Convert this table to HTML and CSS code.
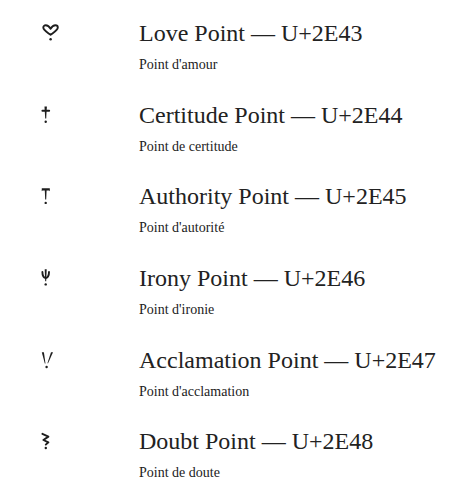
FILE: index.html
```html
<!DOCTYPE html>
<html lang="en">
<head>
<meta charset="utf-8">
<title>Punctuation Points</title>
<link rel="stylesheet" href="styles.css">
</head>
<body>
<ul class="points">
  <li class="point">
    <svg class="glyph" viewBox="0 0 22 22" width="22" height="22" aria-hidden="true">
      <path class="line" d="M10.6 12.8 C7.5 10.5 3.3 8.3 3.3 5.6 C3.3 4 4.4 3.3 5.7 3.3 C7.5 3.3 9.4 4.8 10.6 6.8 C11.8 4.8 13.6 3.3 15.4 3.3 C16.7 3.3 17.8 4 17.8 5.6 C17.8 8.3 13.7 10.5 10.6 12.8"/>
      <circle class="dot" cx="10.6" cy="17.2" r="1.25"/>
    </svg>
    <div class="text">
      <h2 class="name">Love Point — U+2E43</h2>
      <p class="fr">Point d'amour</p>
    </div>
  </li>
  <li class="point">
    <svg class="glyph" viewBox="0 0 22 22" width="22" height="22" aria-hidden="true">
      <path class="fill" d="M4.5 2.6 L6.9 2.6 L6.2 14.4 L5.2 14.4 Z"/>
      <path class="line" d="M2.4 6.8 L9.2 6.8"/>
      <circle class="dot" cx="5.7" cy="17.7" r="1.2"/>
    </svg>
    <div class="text">
      <h2 class="name">Certitude Point — U+2E44</h2>
      <p class="fr">Point de certitude</p>
    </div>
  </li>
  <li class="point">
    <svg class="glyph" viewBox="0 0 22 22" width="22" height="22" aria-hidden="true">
      <path class="fill" d="M1.8 3.2 L9.8 3.2 L9.9 6.2 L9.1 5.4 L6.6 5.4 L6.2 14.4 L5.2 14.4 L4.8 5.4 L2.5 5.4 L1.7 6.2 Z"/>
      <circle class="dot" cx="5.7" cy="17.9" r="1.2"/>
    </svg>
    <div class="text">
      <h2 class="name">Authority Point — U+2E45</h2>
      <p class="fr">Point d'autorité</p>
    </div>
  </li>
  <li class="point">
    <svg class="glyph" viewBox="0 0 22 22" width="22" height="22" aria-hidden="true">
      <path class="fill" d="M4.7 2.2 L6.7 2.2 L6.2 14.2 L5.2 14.2 Z"/>
      <path class="line" d="M2.4 5 C2.4 8.6 3.6 10.6 5.7 11.2 C7.8 10.6 9 8.6 9 5"/>
      <circle class="dot" cx="5.7" cy="17.4" r="1.2"/>
    </svg>
    <div class="text">
      <h2 class="name">Irony Point — U+2E46</h2>
      <p class="fr">Point d'ironie</p>
    </div>
  </li>
  <li class="point">
    <svg class="glyph" viewBox="0 0 22 22" width="22" height="22" aria-hidden="true">
      <path class="fill" d="M1.8 3.2 L3.9 3.2 L5.5 14.6 L4.8 14.6 Z"/>
      <path class="fill" d="M11 3.2 L13 3.2 L8.1 14.2 L7.4 14.2 Z"/>
      <circle class="dot" cx="6.6" cy="18" r="1.2"/>
    </svg>
    <div class="text">
      <h2 class="name">Acclamation Point — U+2E47</h2>
      <p class="fr">Point d'acclamation</p>
    </div>
  </li>
  <li class="point">
    <svg class="glyph" viewBox="0 0 22 22" width="22" height="22" aria-hidden="true">
      <path class="line" d="M2.4 3.8 L8.4 6.6 L3.4 10 L8.4 12.3 L5.8 14.6"/>
      <circle class="dot" cx="5.8" cy="18" r="1.2"/>
    </svg>
    <div class="text">
      <h2 class="name">Doubt Point — U+2E48</h2>
      <p class="fr">Point de doute</p>
    </div>
  </li>
</ul>
</body>
</html>
```
FILE: styles.css
```css
html, body {
  margin: 0;
  padding: 0;
  background: #ffffff;
}

body {
  font-family: "Liberation Serif", "Times New Roman", serif;
  color: #222222;
}

.points {
  list-style: none;
  margin: 0;
  padding: 19px 0 0 40px;
  display: flex;
  flex-direction: column;
  gap: 27.7px;
}

.point {
  display: flex;
  align-items: flex-start;
  gap: 77px;
}

.glyph {
  flex: none;
  margin-top: 3px;
}

.glyph .line {
  fill: none;
  stroke: #1e1e1e;
  stroke-width: 1.9;
  stroke-linecap: round;
  stroke-linejoin: round;
}

.glyph .fill,
.glyph .dot {
  fill: #1e1e1e;
}

.text {
  display: flex;
  flex-direction: column;
  gap: 10px;
}

.name {
  margin: 0;
  font-size: 24px;
  font-weight: normal;
  line-height: 28px;
  color: #222222;
}

.fr {
  margin: 0;
  font-size: 14px;
  line-height: 16px;
  color: #222222;
}
```
